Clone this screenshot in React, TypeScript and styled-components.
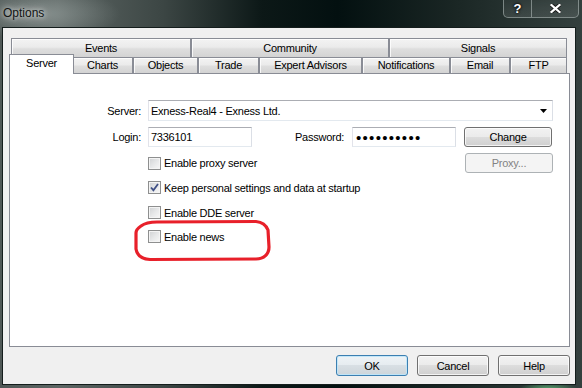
import React from "react";
import styled, { createGlobalStyle } from "styled-components";

const Global = createGlobalStyle`
  html, body { margin: 0; padding: 0; background: #1b2524; }
  body { width: 582px; height: 388px; overflow: hidden; }
  #root { width: 582px; height: 388px; }
  * { box-sizing: border-box; }
`;

const Win = styled.div`
  width: 582px;
  height: 388px;
  display: flex;
  flex-direction: column;
  background:
    radial-gradient(ellipse 30px 8px at 548px 390px, rgba(110, 220, 140, 0.75), transparent),
    radial-gradient(ellipse 80px 26px at 40px 14px, rgba(170, 180, 178, 0.55), transparent),
    linear-gradient(90deg, #4f5856 0%, #5d6664 10%, #3c4644 28%, #0c1817 45%, #031010 58%, #1a2624 78%, #34403e 100%);
  font-family: "Liberation Sans", Arial, sans-serif;
  font-size: 11px;
  letter-spacing: -0.25px;
  color: #000;
`;

const TitleBar = styled.div`
  height: 27px;
  display: flex;
  align-items: flex-start;
  padding: 0 3px;
`;

const Title = styled.span`
  font-size: 12px;
  letter-spacing: 0;
  line-height: 27px;
  color: #121414;
  text-shadow: 0 0 5px rgba(255, 255, 255, 0.85), 0 0 10px rgba(255, 255, 255, 0.5);
`;

const CaptionGroup = styled.div`
  margin-left: auto;
  display: flex;
  height: 18px;
  border: 1px solid rgba(175, 185, 183, 0.6);
  border-top: none;
  border-radius: 0 0 5px 5px;
  overflow: hidden;
  background: linear-gradient(rgba(255, 255, 255, 0.04), rgba(255, 255, 255, 0.1));
`;

const CaptionBtn = styled.div<{ $w: number; $divider?: boolean }>`
  width: ${(p) => p.$w}px;
  display: flex;
  align-items: center;
  justify-content: center;
  border-left: ${(p) => (p.$divider ? "1px solid rgba(175,185,183,0.6)" : "none")};
  color: #fff;
  font-weight: bold;
  font-size: 13px;
  letter-spacing: 0;
  text-shadow: 0 0 2px #000, 0 0 3px #000;
`;

const Client = styled.div`
  flex: 1;
  margin: 0 6px 3px 2px;
  border: 1px solid #141d1c;
  background: #f0f0f0;
  display: flex;
  flex-direction: column;
  padding: 10px 5px 8px 6px;
`;

const TabControl = styled.div`
  display: flex;
  flex-direction: column;
  width: 561px;
`;

const TabRow = styled.div<{ $h: number }>`
  display: flex;
  height: ${(p) => p.$h}px;
  padding-left: 2px;
`;

const Tab = styled.div<{ $w: number; $h: number; $selected?: boolean }>`
  position: relative;
  flex: none;
  width: ${(p) => (p.$selected ? p.$w + 4 : p.$w)}px;
  height: ${(p) => (p.$selected ? p.$h + 4 : p.$h)}px;
  margin: ${(p) => (p.$selected ? "-3px -2px 0 -2px" : "0")};
  z-index: ${(p) => (p.$selected ? 2 : 0)};
  border: 1px solid #898c95;
  border-bottom: none;
  background: ${(p) =>
    p.$selected
      ? "#ffffff"
      : "linear-gradient(#f3f3f3 0%, #ebebeb 45%, #dedede 55%, #d3d3d3 100%)"};
  box-shadow: ${(p) => (p.$selected ? "none" : "inset 1px 1px 0 rgba(255,255,255,0.8)")};
  text-align: center;
  line-height: ${(p) => (p.$selected ? p.$h : p.$h - 1)}px;
  white-space: nowrap;
`;

const Panel = styled.div`
  position: relative;
  z-index: 1;
  height: 274px;
  border: 1px solid #898c95;
  background: #ffffff;
  padding: 26px 16px 0 0;
  display: flex;
  flex-direction: column;
`;

const FormRow = styled.div<{ $mt: number; $h: number }>`
  display: flex;
  align-items: center;
  margin-top: ${(p) => p.$mt}px;
  height: ${(p) => p.$h}px;
`;

const FieldLabel = styled.div<{ $w: number; $align?: string }>`
  width: ${(p) => p.$w}px;
  text-align: ${(p) => p.$align || "right"};
  flex: none;
`;

const TextBox = styled.div<{ $w: number; $h: number }>`
  width: ${(p) => p.$w}px;
  height: ${(p) => p.$h}px;
  flex: none;
  background: #fff;
  border: 1px solid;
  border-color: #abadb3 #dbdfe6 #e3e9ef #e2e3ea;
  padding-left: 2px;
  display: flex;
  align-items: center;
  white-space: nowrap;
`;

const Combo = styled(TextBox)`
  justify-content: space-between;
  padding-right: 5px;
`;

const Dots = styled.span`
  font-size: 15px;
  letter-spacing: 1.3px;
  line-height: 1;
  padding-left: 1px;
`;

const Button = styled.div<{ $w: number; $h: number; $ml?: string; $default?: boolean; $disabled?: boolean }>`
  width: ${(p) => p.$w}px;
  height: ${(p) => p.$h}px;
  flex: none;
  margin-left: ${(p) => p.$ml || "0"};
  display: flex;
  align-items: center;
  justify-content: center;
  border-radius: 3px;
  border: 1px solid ${(p) => (p.$disabled ? "#adb2b5" : p.$default ? "#3c7fb1" : "#707070")};
  background: ${(p) =>
    p.$disabled
      ? "#f4f4f4"
      : p.$default
      ? "linear-gradient(#eef3f6 0%, #e6ecf0 49%, #d8dfe4 50%, #cdd5da 100%)"
      : "linear-gradient(#f2f2f2 0%, #ebebeb 49%, #dddddd 50%, #cfcfcf 100%)"};
  box-shadow: ${(p) =>
    p.$disabled
      ? "none"
      : p.$default
      ? "inset 0 0 0 1px rgba(190, 230, 250, 0.9)"
      : "inset 0 0 0 1px rgba(255, 255, 255, 0.75)"};
  color: ${(p) => (p.$disabled ? "#838383" : "#000")};
`;

const CheckRow = styled.div<{ $mt: number }>`
  display: flex;
  align-items: center;
  margin-left: 138px;
  margin-top: ${(p) => p.$mt}px;
  height: 13px;
  gap: 3px;
`;

const InlineCheck = styled.div`
  display: flex;
  align-items: center;
  gap: 3px;
  margin-left: 138px;
`;

const Box = styled.div`
  width: 13px;
  height: 13px;
  flex: none;
  border: 1px solid #8e8f8f;
  background: linear-gradient(135deg, #cfd1d3 0%, #e6e7e8 50%, #f8f8f8 100%);
  box-shadow: inset 0 0 0 1px #f4f4f4;
  display: flex;
  align-items: center;
  justify-content: center;
`;

const ButtonBar = styled.div`
  display: flex;
  justify-content: flex-end;
  gap: 9px;
  margin-top: 8px;
`;

const Annotation = styled.svg`
  position: absolute;
  left: 120px;
  top: 143px;
  pointer-events: none;
`;

const CheckBox: React.FC<{ checked?: boolean; label: string }> = ({ checked, label }) => (
  <>
    <Box>
      {checked && (
        <svg width="9" height="9" viewBox="0 0 9 9">
          <path d="M1 4.5 L3.4 7.2 L8 1" fill="none" stroke="#3f4f85" strokeWidth="1.8" />
        </svg>
      )}
    </Box>
    <span>{label}</span>
  </>
);

const row1 = [
  { t: "Events", w: 180 },
  { t: "Community", w: 198 },
  { t: "Signals", w: 178 },
];
const row2 = [
  { t: "Server", w: 61, sel: true },
  { t: "Charts", w: 61 },
  { t: "Objects", w: 65 },
  { t: "Trade", w: 61 },
  { t: "Expert Advisors", w: 103 },
  { t: "Notifications", w: 88 },
  { t: "Email", w: 60 },
  { t: "FTP", w: 57 },
];

export default function App() {
  return (
    <>
      <Global />
      <Win>
        <TitleBar>
          <Title>Options</Title>
          <CaptionGroup>
            <CaptionBtn $w={27}>?</CaptionBtn>
            <CaptionBtn $w={47} $divider>
              <svg width="11" height="9" viewBox="0 0 11 9">
                <path d="M1.5 1 L9.5 8 M9.5 1 L1.5 8" stroke="#1a1a1a" strokeWidth="4" strokeLinecap="square" />
                <path d="M1.5 1 L9.5 8 M9.5 1 L1.5 8" stroke="#ffffff" strokeWidth="2.2" strokeLinecap="square" />
              </svg>
            </CaptionBtn>
          </CaptionGroup>
        </TitleBar>
        <Client>
          <TabControl>
            <TabRow $h={19}>
              {row1.map((r) => (
                <Tab key={r.t} $w={r.w} $h={19}>
                  {r.t}
                </Tab>
              ))}
            </TabRow>
            <TabRow $h={16}>
              {row2.map((r) => (
                <Tab key={r.t} $w={r.w} $h={16} $selected={r.sel}>
                  {r.t}
                </Tab>
              ))}
            </TabRow>
            <Panel>
              <FormRow $mt={0} $h={21}>
                <FieldLabel $w={131}>Server:</FieldLabel>
                <Combo $w={405} $h={21} style={{ marginLeft: 7 }}>
                  <span>Exness-Real4 - Exness Ltd.</span>
                  <svg width="7" height="4" viewBox="0 0 7 4">
                    <path d="M0 0 H7 L3.5 4 Z" fill="#000" />
                  </svg>
                </Combo>
              </FormRow>
              <FormRow $mt={6} $h={20}>
                <FieldLabel $w={131}>Login:</FieldLabel>
                <TextBox $w={104} $h={20} style={{ marginLeft: 7 }}>
                  7336101
                </TextBox>
                <FieldLabel $w={57} $align="left" style={{ marginLeft: 43 }}>
                  Password:
                </FieldLabel>
                <TextBox $w={104} $h={20}>
                  <Dots>••••••••••</Dots>
                </TextBox>
                <Button $w={88} $h={20} $ml="8px">
                  Change
                </Button>
              </FormRow>
              <FormRow $mt={6} $h={20}>
                <InlineCheck>
                  <CheckBox label="Enable proxy server" />
                </InlineCheck>
                <Button $w={88} $h={20} $ml="auto" $disabled>
                  Proxy...
                </Button>
              </FormRow>
              <CheckRow $mt={8}>
                <CheckBox checked label="Keep personal settings and data at startup" />
              </CheckRow>
              <CheckRow $mt={12}>
                <CheckBox label="Enable DDE server" />
              </CheckRow>
              <CheckRow $mt={11}>
                <CheckBox label="Enable news" />
              </CheckRow>
              <Annotation width="150" height="50" viewBox="0 0 150 50">
                <path
                  d="M11 9 C15 6, 20 5, 27 5 L126 4.5 C132 5, 136 8, 138 13 L139 30 C139 37, 134 42, 126 42 L20 42.5 C12 42, 7 38, 6 32 L6 16 C6 13, 8 11, 11 9 Z"
                  fill="none"
                  stroke="#e8202a"
                  strokeWidth="3.2"
                />
              </Annotation>
            </Panel>
          </TabControl>
          <ButtonBar>
            <Button $w={72} $h={21} $default>
              OK
            </Button>
            <Button $w={72} $h={21}>
              Cancel
            </Button>
            <Button $w={72} $h={21}>
              Help
            </Button>
          </ButtonBar>
        </Client>
      </Win>
    </>
  );
}
